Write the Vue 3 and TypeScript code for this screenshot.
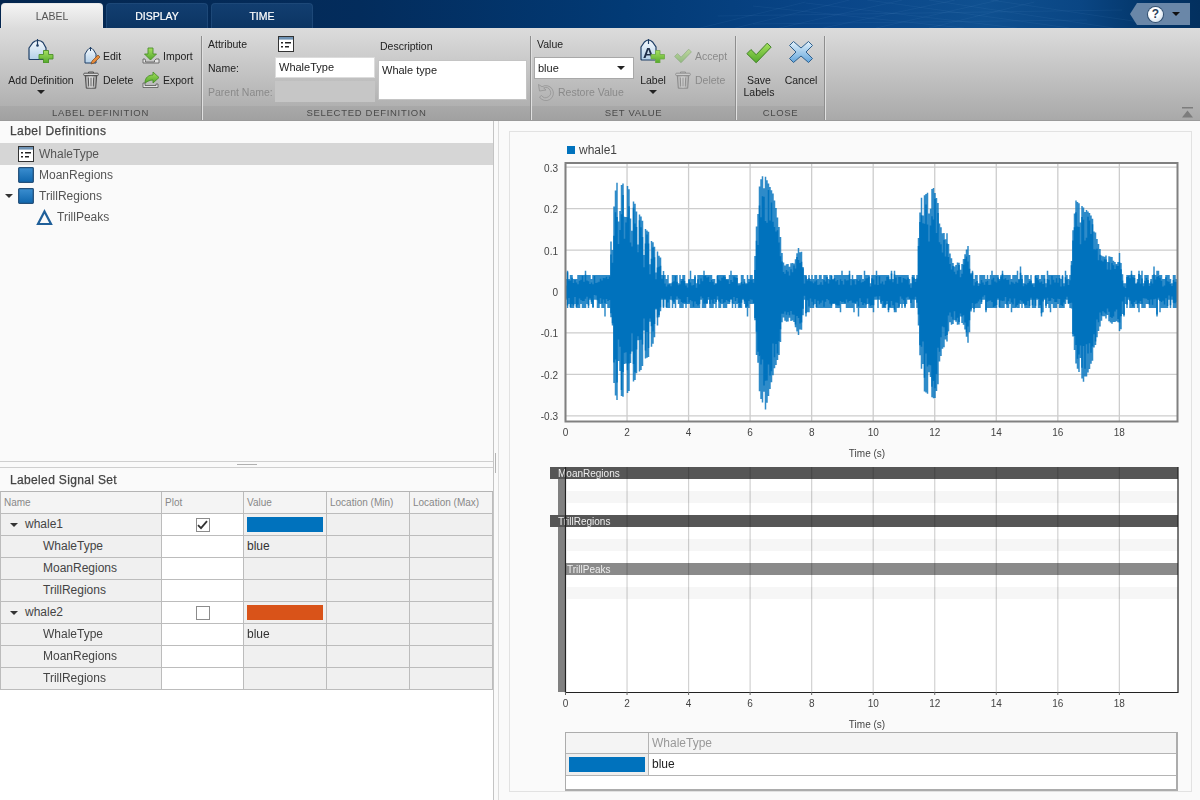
<script setup lang="ts">
type Knot = [number, number];

const ticks = [0, 2, 4, 6, 8, 10, 12, 14, 16, 18];
const xOf = (t: number) => 565.5 + t * 30.77;
const yOf = (v: number) => 291.5 - v * 414.5;
const yTicks = [0.3, 0.2, 0.1, 0, -0.1, -0.2, -0.3];

const posKnots: Knot[] = [
  [1.42, 0], [1.47, 0.12], [1.58, 0.22], [1.65, 0.27], [2.0, 0.265], [2.33, 0.2], [2.76, 0.135], [3.08, 0.085], [3.22, 0.04],
  [6.13, 0], [6.18, 0.15], [6.28, 0.26], [6.45, 0.285], [6.78, 0.23], [6.95, 0.15], [7.05, 0.1], [7.12, 0.065], [7.45, 0.07], [7.63, 0.125], [7.76, 0.03],
  [11.43, 0], [11.47, 0.13], [11.55, 0.225], [11.96, 0.25], [12.4, 0.14], [12.57, 0.07], [12.9, 0.07], [13.09, 0.115], [13.22, 0.03],
  [16.42, 0], [16.46, 0.12], [16.58, 0.22], [17.1, 0.185], [17.26, 0.13], [17.42, 0.09], [17.9, 0.08], [18.02, 0.095], [18.12, 0.03]
];
const negKnots: Knot[] = [
  [1.42, 0], [1.5, 0.09], [1.58, 0.24], [1.65, 0.27], [2.0, 0.255], [2.3, 0.21], [2.76, 0.15], [2.92, 0.11], [3.08, 0.05], [3.16, 0.03],
  [6.13, 0], [6.2, 0.17], [6.3, 0.25], [6.5, 0.285], [6.75, 0.2], [6.95, 0.15], [7.05, 0.075], [7.4, 0.07], [7.63, 0.12], [7.76, 0.03],
  [11.43, 0], [11.5, 0.14], [11.65, 0.24], [12.0, 0.26], [12.35, 0.14], [12.5, 0.08], [12.95, 0.08], [13.09, 0.13], [13.22, 0.03],
  [16.42, 0], [16.48, 0.1], [16.6, 0.18], [16.85, 0.22], [17.12, 0.17], [17.3, 0.1], [17.48, 0.06], [17.95, 0.09], [18.05, 0.1], [18.13, 0.03]
];

function envAt(knots: Knot[], t: number): number {
  for (let i = 0; i < knots.length - 1; i++) {
    const [t0, v0] = knots[i];
    const [t1, v1] = knots[i + 1];
    if (t >= t0 && t <= t1) {
      if (t1 - t0 > 1.5) return 0;
      return v0 + ((v1 - v0) * (t - t0)) / (t1 - t0);
    }
  }
  return 0;
}

let seed = 90210;
function rnd(): number {
  seed = (seed + 0x6d2b79f5) | 0;
  let r = Math.imul(seed ^ (seed >>> 15), 1 | seed);
  r = (r + Math.imul(r ^ (r >>> 7), 61 | r)) ^ r;
  return ((r ^ (r >>> 14)) >>> 0) / 4294967296;
}
function noiseAmp(): number {
  const r = rnd();
  if (r < 0.025) return 0.06;
  if (r < 0.09) return 0.05;
  if (r < 0.72) return 0.04;
  if (r < 0.9) return 0.03;
  return 0.02;
}

let outer = "";
let core = "";
for (let x = 566; x < 1177.5; x += 1.5) {
  const t = (x - 565.5) / 30.77;
  let comb = rnd() < 0.6 ? 1 : 0.75 + 0.25 * rnd();
  if (t > 1.4 && t < 3.2) {
    const c = Math.abs(Math.cos((Math.PI * x) / 6.1));
    comb = c > 0.45 ? 0.94 + 0.06 * rnd() : 0.3 + c;
  }
  const p = Math.max(noiseAmp(), envAt(posKnots, t) * comb);
  const n = Math.max(noiseAmp(), envAt(negKnots, t) * comb);
  outer += `M${x.toFixed(1)} ${yOf(p).toFixed(1)}V${yOf(-n).toFixed(1)}`;
  const inBurst = envAt(posKnots, t) > 0.05;
  const lo = inBurst ? 0.6 : 0.4;
  const cp = p * (lo + (0.95 - lo) * rnd());
  const cn = n * (lo + (0.95 - lo) * rnd());
  core += `M${x.toFixed(1)} ${yOf(cp).toFixed(1)}V${yOf(-cn).toFixed(1)}`;
}

const labelBars = [
  { name: "MoanRegions", y: 467, x: 550, textX: 558, fill: "#565656" },
  { name: "TrillRegions", y: 515, x: 550, textX: 558, fill: "#565656" },
  { name: "TrillPeaks", y: 563, x: 566, textX: 567, fill: "#8a8a8a" }
];

const tableRows = [
  { name: "whale1", group: true, checked: true, swatch: "#0072bd", value: "" },
  { name: "WhaleType", value: "blue" },
  { name: "MoanRegions", value: "" },
  { name: "TrillRegions", value: "" },
  { name: "whale2", group: true, checked: false, swatch: "#d95319", value: "" },
  { name: "WhaleType", value: "blue" },
  { name: "MoanRegions", value: "" },
  { name: "TrillRegions", value: "" }
];
</script>

<template>
  <div class="app">
    <svg class="defs" width="0" height="0" aria-hidden="true">
      <defs>
        <linearGradient id="tagFill" x1="0" y1="0" x2="0" y2="1">
          <stop offset="0" stop-color="#f4f9fd" />
          <stop offset="1" stop-color="#b4d0e8" />
        </linearGradient>
        <linearGradient id="greenFill" x1="0" y1="0" x2="0" y2="1">
          <stop offset="0" stop-color="#a6e05e" />
          <stop offset="1" stop-color="#53a92c" />
        </linearGradient>
        <linearGradient id="canFill" x1="0" y1="0" x2="1" y2="0">
          <stop offset="0" stop-color="#9a9a9a" />
          <stop offset=".5" stop-color="#f2f2f2" />
          <stop offset="1" stop-color="#8a8a8a" />
        </linearGradient>
        <linearGradient id="xFill" x1="0" y1="0" x2="0" y2="1">
          <stop offset="0" stop-color="#e4f2fb" />
          <stop offset="1" stop-color="#62a5dc" />
        </linearGradient>
        <linearGradient id="blueSq" x1="0" y1="0" x2="0" y2="1">
          <stop offset="0" stop-color="#3b8ed0" />
          <stop offset="1" stop-color="#0f66ad" />
        </linearGradient>
        <symbol id="i-trash" viewBox="0 0 16 18">
          <path d="M5.5 2V1h5v1" fill="none" stroke="#555" />
          <rect x=".7" y="2.2" width="14.6" height="2.4" rx="1" fill="#d8d8d8" stroke="#444" stroke-width=".9" />
          <path d="M2.3 4.8h11.4l-1 12.4H3.3z" fill="url(#canFill)" stroke="#444" stroke-width=".9" />
          <path d="M5.3 6.5l.4 9M8 6.5v9M10.7 6.5l-.4 9" stroke="#555" stroke-width="1" fill="none" />
        </symbol>
        <symbol id="i-check" viewBox="0 0 24 20">
          <path d="M.8 10.6L4.6 6.8l4.8 4.8L19.6.9l3.6 3.7L9.4 19z" fill="url(#greenFill)" stroke="#3f7f25" stroke-width=".9" stroke-linejoin="round" />
        </symbol>
        <symbol id="i-attr" viewBox="0 0 16 16">
          <rect x=".5" y=".5" width="15" height="15" fill="#fff" stroke="#333" />
          <rect x="1" y="1" width="14" height="2.6" fill="#6f93b5" />
          <path d="M3 6.8h2M7 6.8h6M3 10.8h2M7 10.8h4" stroke="#222" stroke-width="1.4" fill="none" />
        </symbol>
        <symbol id="i-blue" viewBox="0 0 16 16">
          <rect x=".7" y=".7" width="14.6" height="14.6" rx=".8" fill="url(#blueSq)" stroke="#24507a" stroke-width="1.3" />
        </symbol>
      </defs>
    </svg>

    <header class="titlebar">
      <svg class="mesh" viewBox="0 0 500 28" preserveAspectRatio="none" aria-hidden="true">
        <path d="M0 28L120 2M40 28L170 0M90 28L230 0M140 28L290 0M200 28L340 0M260 28L380 2M60 6L300 28M120 3L360 28M190 0L420 28M260 0L470 28M330 0L500 22M20 16L480 10M60 24L440 20" stroke="#8fc0ec" stroke-width=".5" fill="none" opacity=".14" />
      </svg>
      <nav class="tabs">
        <div class="tab active">LABEL</div>
        <div class="tab">DISPLAY</div>
        <div class="tab">TIME</div>
      </nav>
      <div class="help">
        <span class="help-q">?</span>
        <span class="help-arrow"></span>
      </div>
    </header>

    <section class="toolstrip">
      <div class="sec s1">
        <div class="sec-body">
          <div class="big add-def">
            <svg class="ic-big" width="28" height="24" viewBox="0 0 28 24">
              <path d="M2 9L6 3.5Q8 1.5 11 1.5t5 2L19 9v10.5q0 1-1 1H3q-1 0-1-1z" fill="url(#tagFill)" stroke="#1f3f66" stroke-width="1.2" />
              <path d="M10.5 0v6" stroke="#1f3f66" stroke-width="1.2" />
              <circle cx="10.5" cy="6.5" r="1.3" fill="#1f3f66" />
              <path d="M16.5 11.5h5v4h4.5v4.5h-4.5v4h-5v-4H12v-4.500h4.500z" fill="url(#greenFill)" stroke="#4b8e2a" stroke-width=".9" />
            </svg>
            <span>Add Definition</span>
            <i class="caret"></i>
          </div>
          <div class="smalls col-a">
            <div class="small">
              <svg width="18" height="18" viewBox="0 0 18 18">
                <path d="M3 7l2.500-4q1.500-2 3-2t3 2l2.500 4v9H3z" fill="url(#tagFill)" stroke="#1f3f66" />
                <path d="M8.500 0v4" stroke="#1f3f66" />
                <path d="M9 17l1-3 6-6 2 2-6 6z" fill="#e88b3a" stroke="#7a4a20" stroke-width=".7" />
              </svg>
              <span>Edit</span>
            </div>
            <div class="small">
              <svg width="18" height="18"><use href="#i-trash" /></svg>
              <span>Delete</span>
            </div>
          </div>
          <div class="smalls col-b">
            <div class="small">
              <svg width="18" height="18" viewBox="0 0 18 18">
                <path d="M6 1h5v6h3.500L8.500 13 2.500 7H6z" fill="url(#greenFill)" stroke="#4b8e2a" stroke-width=".9" />
                <path d="M1 12v4h16v-4h-3l-1.500 1.500V15h-9v-1.500L3 12z" fill="#e4e4e4" stroke="#555" stroke-width=".8" />
              </svg>
              <span>Import</span>
            </div>
            <div class="small">
              <svg width="18" height="18" viewBox="0 0 18 18">
                <path d="M3 12C3 6 7 4 11 4V1l6 5.500-6 5.500V9c-3 0-5 1-8 3z" fill="url(#greenFill)" stroke="#4b8e2a" stroke-width=".9" />
                <path d="M1 12v4.500h15V13h-2v1.500H3V12z" fill="#e4e4e4" stroke="#555" stroke-width=".8" />
              </svg>
              <span>Export</span>
            </div>
          </div>
        </div>
        <footer>LABEL DEFINITION</footer>
      </div>

      <div class="sec s2">
        <div class="sec-body">
          <div class="attr-col">
            <div class="attr-head">
              <span>Attribute</span>
              <svg width="16" height="16"><use href="#i-attr" /></svg>
            </div>
            <div class="field-row">
              <span>Name:</span>
              <div class="input">WhaleType</div>
            </div>
            <div class="field-row muted">
              <span>Parent Name:</span>
              <div class="input off"></div>
            </div>
          </div>
          <div class="desc-col">
            <span class="desc-label">Description</span>
            <div class="textarea">Whale type</div>
          </div>
        </div>
        <footer>SELECTED DEFINITION</footer>
      </div>

      <div class="sec s3">
        <div class="sec-body">
          <div class="val-col">
            <span class="val-label">Value</span>
            <div class="select">blue<i class="caret"></i></div>
            <div class="small muted restore">
              <svg width="18" height="18" viewBox="0 0 18 18">
                <path d="M1.500 1.500l1 6.500 6.500-1-2.300-2a5 5 0 1 1-2.200 7.500l-2 1.500A7.500 7.500 0 1 0 5 3.700z" fill="#b8b8b8" stroke="#8f8f8f" stroke-width=".7" />
              </svg>
              <span>Restore Value</span>
            </div>
          </div>
          <div class="big label-btn">
            <svg class="ic-big" width="26" height="24" viewBox="0 0 26 24">
              <path d="M1 8L4.500 3Q6.500 1 8.500 1T12.500 3L16 8v12q0 1-1 1H2q-1 0-1-1z" fill="url(#tagFill)" stroke="#1f3f66" stroke-width="1.200" />
              <path d="M8.500 0v5" stroke="#1f3f66" stroke-width="1.200" />
              <text x="8.500" y="19" text-anchor="middle" class="tag-a">A</text>
              <path d="M15.500 11.500h4.500v4h4.500V20H20v4h-4.500v-4H11v-4.500h4.500z" fill="url(#greenFill)" stroke="#6fa84a" stroke-width=".8" />
            </svg>
            <span>Label</span>
            <i class="caret"></i>
          </div>
          <div class="smalls col-c">
            <div class="small muted">
              <svg class="faded" width="18" height="18" viewBox="0 0 24 20"><use href="#i-check" /></svg>
              <span>Accept</span>
            </div>
            <div class="small muted">
              <svg class="faded" width="18" height="18"><use href="#i-trash" /></svg>
              <span>Delete</span>
            </div>
          </div>
        </div>
        <footer>SET VALUE</footer>
      </div>

      <div class="sec s4">
        <div class="sec-body">
          <div class="big save">
            <svg class="ic-big" width="26" height="24" viewBox="0 0 24 20"><use href="#i-check" /></svg>
            <span>Save<br />Labels</span>
          </div>
          <div class="big cancel">
            <svg class="ic-big" width="26" height="24" viewBox="0 0 26 24">
              <path d="M5.500 1.500L13 8l7.500-6.500 4 4L18 12l6.500 6.500-4 4L13 16l-7.500 6.500-4-4L8 12 1.500 5.500z" fill="url(#xFill)" stroke="#2d5f8d" stroke-width="1" stroke-linejoin="round" />
            </svg>
            <span>Cancel</span>
          </div>
        </div>
        <footer>CLOSE</footer>
      </div>

      <div class="sec-rest">
        <svg class="collapse" width="11" height="11" viewBox="0 0 11 11">
          <path d="M0 0h11v1.500H0zM5.500 3.500L11 10.500H0z" fill="#7d7d7d" />
        </svg>
      </div>
    </section>

    <main class="main">
      <aside class="left">
        <div class="defs-pane">
          <h2>Label Definitions</h2>
          <div class="tree-row selected">
            <svg class="t-icon" width="16" height="16"><use href="#i-attr" /></svg>
            <span>WhaleType</span>
          </div>
          <div class="tree-row">
            <svg class="t-icon" width="16" height="16"><use href="#i-blue" /></svg>
            <span>MoanRegions</span>
          </div>
          <div class="tree-row">
            <i class="caret tree-caret"></i>
            <svg class="t-icon" width="16" height="16"><use href="#i-blue" /></svg>
            <span>TrillRegions</span>
          </div>
          <div class="tree-row child">
            <svg class="t-icon" width="17" height="17" viewBox="0 0 17 17">
              <path d="M8.500 2.500L15 15H2z" fill="none" stroke="#1f5f99" stroke-width="2.200" />
            </svg>
            <span>TrillPeaks</span>
          </div>
        </div>
        <div class="h-split"><i></i></div>
        <div class="set-pane">
          <h2>Labeled Signal Set</h2>
          <div class="grid">
            <div class="cell head">Name</div>
            <div class="cell head">Plot</div>
            <div class="cell head">Value</div>
            <div class="cell head">Location (Min)</div>
            <div class="cell head">Location (Max)</div>
            <template v-for="(r, i) in tableRows" :key="i">
              <div class="cell name" :class="{ group: r.group }">
                <i v-if="r.group" class="caret tree-caret2"></i>{{ r.name }}
              </div>
              <div class="cell plotc">
                <span v-if="r.group" class="cb">
                  <svg v-if="r.checked" width="11" height="10" viewBox="0 0 11 10">
                    <path d="M1 5.200l3 3L10 1.200" fill="none" stroke="#333" stroke-width="1.800" />
                  </svg>
                </span>
              </div>
              <div class="cell val">
                <span v-if="r.swatch" class="swatch" :style="{ background: r.swatch }"></span>
                <template v-else>{{ r.value }}</template>
              </div>
              <div class="cell val"></div>
              <div class="cell val"></div>
            </template>
          </div>
        </div>
      </aside>

      <div class="v-split"><i></i></div>

      <div class="right">
        <div class="plots">
          <svg class="chart" width="681" height="600" viewBox="510 132 681 600">
            <rect x="567" y="146" width="8" height="8" fill="#0072bd" />
            <text x="579" y="153.500" class="legend">whale1</text>

            <rect x="566" y="164" width="611" height="257" fill="#fff" />
            <g class="gridl">
              <line v-for="t in ticks" :key="'u' + t" :x1="xOf(t)" :x2="xOf(t)" y1="164" y2="421" />
              <line v-for="v in yTicks" :key="'h' + v" x1="566" x2="1177" :y1="yOf(v)" :y2="yOf(v)" />
            </g>
            <path :d="outer" class="wave-o" />
            <path :d="core" class="wave-c" />
            <rect x="565.500" y="163" width="612" height="258.500" class="frame" />
            <text v-for="v in yTicks" :key="'yl' + v" x="558" :y="yOf(v) + 4.500" text-anchor="end" class="tick">{{ v }}</text>
            <text v-for="t in ticks" :key="'xl' + t" :x="xOf(t)" y="436" text-anchor="middle" class="tick">{{ t }}</text>
            <text x="867" y="457" text-anchor="middle" class="tick">Time (s)</text>

            <rect x="566" y="467" width="612" height="225" fill="#fff" />
            <rect x="567" y="491" width="611" height="12" fill="#f6f6f6" />
            <rect x="567" y="539" width="611" height="12" fill="#f6f6f6" />
            <rect x="567" y="587" width="611" height="12" fill="#f6f6f6" />
            <rect x="558" y="467" width="7" height="225" fill="#808080" />
            <template v-for="b in labelBars" :key="b.name">
              <rect :x="b.x" :y="b.y" :width="1178 - b.x" height="12" :fill="b.fill" />
            </template>
            <g class="gridm">
              <line v-for="t in ticks.slice(1)" :key="'l' + t" :x1="xOf(t)" :x2="xOf(t)" y1="467" y2="692" />
            </g>
            <text v-for="b in labelBars" :key="'t' + b.name" :x="b.textX" :y="b.y + 9.500" class="bar-text">{{ b.name }}</text>
            <path d="M565.500 467V692.500H1178V467" class="lframe" />
            <line v-for="t in ticks" :key="'m' + t" :x1="xOf(t)" :x2="xOf(t)" y1="692" y2="695" class="tickmark" />
            <text v-for="t in ticks" :key="'x2' + t" :x="xOf(t)" y="707" text-anchor="middle" class="tick">{{ t }}</text>
            <text x="867" y="728" text-anchor="middle" class="tick">Time (s)</text>
          </svg>

          <div class="mini">
            <div class="m-head m-first"></div>
            <div class="m-head">WhaleType</div>
            <div class="m-sw"><span></span></div>
            <div class="m-val">blue</div>
            <div class="m-empty"></div>
          </div>
        </div>
      </div>
    </main>
  </div>
</template>

<style>
html,
body {
  margin: 0;
  background: #fafafa;
}
</style>

<style scoped>
.app {
  width: 1200px;
  height: 800px;
  overflow: hidden;
  display: flex;
  flex-direction: column;
  font-family: "Liberation Sans", Arial, sans-serif;
  font-size: 11px;
  color: #222;
}
.defs {
  position: absolute;
}

/* Title bar */
.titlebar {
  height: 28px;
  flex: none;
  position: relative;
  display: flex;
  justify-content: space-between;
  background: linear-gradient(90deg, #04264f 0%, #032c5c 30%, #023a75 52%, #0a4689 70%, #0f5090 82%, #0a4684 90%, #033568 96%, #03305f 100%);
}
.mesh {
  position: absolute;
  left: 700px;
  top: 0;
  width: 440px;
  height: 28px;
}
.tabs {
  display: flex;
  gap: 3px;
  padding: 3px 0 0 1px;
  position: relative;
}
.tab {
  width: 102px;
  height: 25px;
  box-sizing: border-box;
  border: 1px solid #1d4878;
  border-bottom: 0;
  border-radius: 4px 4px 0 0;
  background: linear-gradient(#123e70, #0c3563);
  color: #fff;
  font-size: 10.500px;
  line-height: 25px;
  text-align: center;
  -webkit-text-stroke: 0.2px #fff;
}
.tab.active {
  background: linear-gradient(#f4f4f4, #dcdcdc);
  border-color: #e8e8e8;
  color: #555;
  -webkit-text-stroke: 0;
}
.help {
  position: relative;
  margin: 3px 10px 0 0;
  width: 60px;
  height: 22px;
  background: #6a87a8;
  clip-path: polygon(7px 0, 100% 0, 100% 100%, 7px 100%, 0 50%);
  display: flex;
  align-items: center;
  justify-content: flex-end;
  gap: 9px;
  padding-right: 10px;
  box-sizing: border-box;
}
.help-q {
  width: 15px;
  height: 15px;
  border-radius: 50%;
  background: radial-gradient(circle at 40% 35%, #fff 40%, #bcd0e2 100%);
  box-shadow: 0 0 0 1px #33506f;
  color: #2b3f5c;
  font-size: 12px;
  font-weight: bold;
  line-height: 15px;
  text-align: center;
}
.help-arrow {
  width: 0;
  height: 0;
  border: 4px solid transparent;
  border-top: 4px solid #111;
  border-bottom: 0;
}

/* Toolstrip */
.toolstrip {
  height: 93px;
  flex: none;
  display: flex;
  box-sizing: border-box;
  border-bottom: 1px solid #9a9a9a;
  background: linear-gradient(#dcdcdc, #a9a9a9);
  font-size: 10.500px;
  color: #222;
}
.sec {
  flex: none;
  display: flex;
  flex-direction: column;
  box-sizing: border-box;
  border-right: 1px solid #8e8e8e;
  box-shadow: 1px 0 0 #e0e0e0;
  margin-top: 8px;
}
.s1 { width: 202px; margin-right: 1px; }
.s2 { width: 328px; margin-right: 1px; }
.s3 { width: 204px; margin-right: 1px; }
.s4 { width: 88px; }
.sec-body {
  flex: 1;
  display: flex;
  position: relative;
  min-height: 0;
}
.sec footer {
  height: 14px;
  flex: none;
  background: rgba(0, 0, 0, 0.045);
  color: #4a4a4a;
  font-size: 9.500px;
  letter-spacing: 0.7px;
  line-height: 14px;
  text-align: center;
}
.sec-rest {
  flex: 1;
  display: flex;
  justify-content: flex-end;
  align-items: flex-end;
  padding: 0 7px 2px 0;
}
.big {
  display: flex;
  flex-direction: column;
  align-items: center;
  text-align: center;
  line-height: 12px;
}
.ic-big {
  display: block;
  height: 24px;
}
.caret {
  display: block;
  width: 0;
  height: 0;
  border-left: 4px solid transparent;
  border-right: 4px solid transparent;
  border-top: 4px solid #222;
}
.big .caret {
  margin-top: 4px;
}
.big .ic-big + span {
  margin-top: 11px;
}
.add-def {
  width: 66px;
  padding: 3px 0 0 8px;
}
.smalls {
  display: flex;
  flex-direction: column;
  gap: 6px;
  padding-top: 11px;
}
.col-a { margin-left: 8px; width: 60px; }
.small {
  display: flex;
  align-items: center;
  height: 18px;
  gap: 3px;
  white-space: nowrap;
}
.muted { color: #8a8a8a; }
.faded { opacity: 0.45; }

.attr-col {
  width: 175px;
  padding: 0 0 0 5px;
  box-sizing: border-box;
}
.attr-head {
  display: flex;
  align-items: center;
  gap: 31px;
  height: 16px;
  margin-bottom: 5px;
}
.field-row {
  display: flex;
  align-items: center;
  height: 21px;
  margin-bottom: 3px;
}
.field-row span {
  width: 67px;
  flex: none;
}
.input {
  width: 100px;
  height: 21px;
  box-sizing: border-box;
  background: #fff;
  border: 1px solid #dcdcdc;
  font-size: 11px;
  line-height: 19px;
  padding-left: 3px;
  color: #222;
}
.input.off {
  background: #c6c6c6;
  border-color: #c6c6c6;
}
.desc-col {
  position: relative;
}
.desc-label {
  display: block;
  height: 12px;
  line-height: 12px;
  margin: 4px 0 8px;
  padding-left: 2px;
}
.textarea {
  width: 149px;
  height: 40px;
  box-sizing: border-box;
  background: #fff;
  border: 1px solid #c4c4c4;
  font-size: 11px;
  padding: 3px 0 0 3px;
  line-height: 12px;
}
.val-col {
  width: 105px;
  padding-left: 2px;
}
.val-label {
  display: block;
  height: 16px;
  line-height: 16px;
  padding-left: 3px;
  margin: 0 0 5px;
}
.select {
  width: 100px;
  height: 22px;
  box-sizing: border-box;
  background: #fff;
  border: 1px solid #a8a8a8;
  padding: 0 8px 0 3px;
  display: flex;
  align-items: center;
  justify-content: space-between;
  font-size: 11px;
}
.restore {
  margin: 4px 0 0 3px;
}
.label-btn {
  width: 32px;
  padding-top: 3px;
  margin-left: -2px;
}
.col-c {
  margin-left: 5px;
}
.save {
  width: 44px;
  padding: 5px 0 0 0;
  box-sizing: border-box;
}
.save .ic-big + span {
  margin-top: 9px;
}
.cancel {
  width: 40px;
  padding-top: 4px;
}
.cancel .ic-big + span {
  margin-top: 10px;
}
.collapse {
  display: block;
}

/* Main */
.main {
  flex: 1;
  display: flex;
  min-height: 0;
}
.left {
  width: 494px;
  flex: none;
  box-sizing: border-box;
  border-right: 1px solid #c4c4c4;
  display: flex;
  flex-direction: column;
  background: #fff;
}
h2 {
  margin: 0;
  height: 22px;
  line-height: 21px;
  padding-left: 10px;
  font-size: 12px;
  font-weight: normal;
  letter-spacing: 0.45px;
  color: #444;
  -webkit-text-stroke: 0.25px #444;
  background: #fafafa;
}
.defs-pane {
  height: 340px;
  flex: none;
  background: #fafafa;
  border-bottom: 1px solid #cfcfcf;
}
.tree-row {
  height: 21px;
  box-sizing: border-box;
  padding-bottom: 1px;
  display: flex;
  align-items: center;
  padding-left: 18px;
  gap: 5px;
  font-size: 12px;
  color: #555;
  position: relative;
}
.tree-row.selected {
  height: 22px;
  padding-bottom: 0;
  background: #d6d6d6;
}
.tree-row.child {
  padding-left: 36px;
  gap: 4px;
}
.t-icon {
  display: block;
  flex: none;
}
.tree-caret {
  position: absolute;
  left: 5px;
  top: 8px;
  border-left-width: 4px;
  border-right-width: 4px;
  border-top-color: #333;
}
.h-split {
  height: 5px;
  flex: none;
  background: #fafafa;
  border-bottom: 1px solid #cfcfcf;
  display: flex;
  justify-content: center;
  align-items: center;
}
.h-split i {
  width: 20px;
  height: 1px;
  background: #b0b0b0;
}
.set-pane {
  flex: 1;
  background: #fff;
}
.set-pane h2 {
  height: 23px;
  line-height: 24px;
  letter-spacing: 0.35px;
}
.grid {
  display: grid;
  grid-template-columns: 161px 82px 83px 83px 83px;
  grid-auto-rows: 22px;
  border-top: 1px solid #b4b4b4;
  border-left: 1px solid #bcbcbc;
}
.cell {
  box-sizing: border-box;
  border-right: 1px solid #bcbcbc;
  border-bottom: 1px solid #bcbcbc;
  font-size: 12px;
  line-height: 21px;
  color: #444;
  background: #f0f0f0;
  position: relative;
  white-space: nowrap;
}
.cell.head {
  background: #f4f4f4;
  color: #888;
  font-size: 10px;
  padding-left: 3px;
}
.cell.name {
  padding-left: 42px;
}
.cell.name.group {
  padding-left: 24px;
}
.tree-caret2 {
  position: absolute;
  left: 9px;
  top: 9px;
  border-top-color: #333;
}
.cell.plotc {
  background: #fff;
  display: flex;
  align-items: center;
  justify-content: center;
}
.cb {
  width: 14px;
  height: 14px;
  box-sizing: border-box;
  border: 1px solid #8c8c8c;
  background: #fff;
  display: flex;
  align-items: center;
  justify-content: center;
}
.cell.val {
  padding-left: 3px;
  color: #333;
}
.swatch {
  display: block;
  width: 76px;
  height: 15px;
  margin: 3px 0 0 0;
}

.v-split {
  width: 4px;
  flex: none;
  background: #fafafa;
  position: relative;
  border-right: 1px solid #dcdcdc;
}
.v-split i {
  position: absolute;
  left: 1px;
  top: 332px;
  width: 1px;
  height: 20px;
  background: #b4b4b4;
}
.right {
  flex: 1;
  min-width: 0;
  padding: 10px 8px 8px 10px;
  background: #fafafa;
}
.plots {
  box-sizing: border-box;
  height: 661px;
  border: 1px solid #e2e2e2;
  background: #fafafa;
}
.chart {
  display: block;
}
.legend {
  font-size: 12px;
  fill: #444;
}
.tick {
  font-size: 10px;
  fill: #444;
}
.gridl line {
  stroke: #cdcdcd;
  stroke-width: 1.300;
}
.wave-o {
  fill: none;
  stroke: #0072bd;
  stroke-width: 1.500;
  opacity: 0.82;
}
.wave-c {
  fill: none;
  stroke: #0072bd;
  stroke-width: 1.500;
}
.frame {
  fill: none;
  stroke: #808080;
  stroke-width: 2;
}
.gridm line {
  stroke: #d2d2d2;
  stroke-width: 1.200;
  mix-blend-mode: multiply;
}
.bar-text {
  font-size: 10px;
  fill: #eee;
}
.lframe {
  fill: none;
  stroke: #222;
  stroke-width: 1.200;
}
.tickmark {
  stroke: #666;
  stroke-width: 1;
}
.tag-a {
  font-size: 15px;
  font-weight: bold;
  fill: #1f2f4a;
}
.mini {
  margin-left: 55px;
  width: 613px;
  box-sizing: border-box;
  border: 1px solid #acacac;
  border-right-width: 2px;
  border-bottom-width: 2px;
  display: grid;
  grid-template-columns: 83px 1fr;
  grid-template-rows: 21px 22px 13px;
  background: #fff;
  font-size: 12px;
}
.m-head {
  background: #f4f4f4;
  color: #999;
  border-bottom: 1px solid #b4b4b4;
  line-height: 20px;
  padding-left: 3px;
}
.m-first {
  border-right: 1px solid #b4b4b4;
}
.m-sw {
  background: #eeeeee;
  border-right: 1px solid #b4b4b4;
  border-bottom: 1px solid #b4b4b4;
  padding: 3px 0 0 3px;
}
.m-sw span {
  display: block;
  width: 76px;
  height: 15px;
  background: #0072bd;
}
.m-val {
  border-bottom: 1px solid #b4b4b4;
  line-height: 21px;
  padding-left: 3px;
  color: #222;
}
.m-empty {
  grid-column: 1 / 3;
}
</style>
